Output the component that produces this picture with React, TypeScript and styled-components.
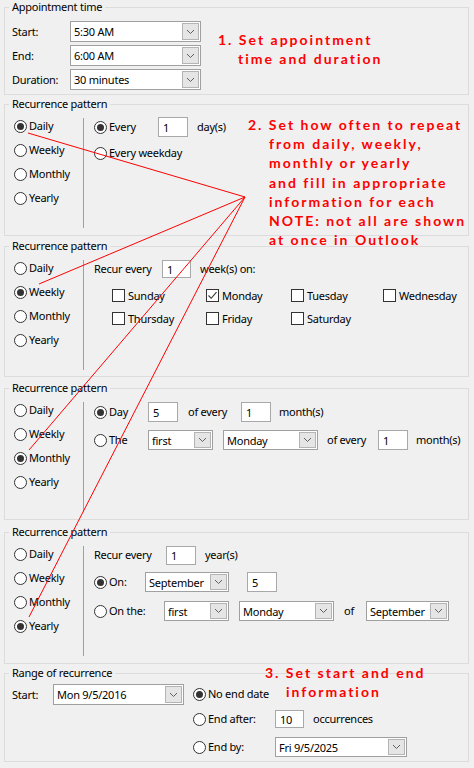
import React from "react";
import styled, { createGlobalStyle } from "styled-components";

const GlobalStyle = createGlobalStyle`
  html, body { margin: 0; padding: 0; background: #f0f0f0; }
  body {
    font-family: "Noto Sans", "Segoe UI", sans-serif;
    font-size: 11px;
    letter-spacing: -0.25px;
    color: #000;
  }
  * { box-sizing: border-box; }
`;

const Page = styled.div`
  position: relative;
  width: 474px;
  height: 768px;
  overflow: hidden;
  padding-left: 4px;
  display: flex;
  flex-direction: column;
`;

const Group = styled.fieldset<{ $mt: number; $h: number }>`
  margin: ${(p) => p.$mt}px 0 0 0;
  padding: 0;
  width: 465px;
  height: ${(p) => p.$h}px;
  min-width: 0;
  border: 1px solid #dcdcdc;
  flex-shrink: 0;
`;

const Legend = styled.legend`
  margin-left: 4px;
  padding: 0 3px;
  line-height: 14px;
  height: 14px;
`;

const Body = styled.div<{ $pt: number; $pl: number }>`
  display: flex;
  padding-top: ${(p) => p.$pt}px;
  padding-left: ${(p) => p.$pl}px;
`;

const Column = styled.div<{ $w?: number; $ml?: number; $gap?: number }>`
  display: flex;
  flex-direction: column;
  width: ${(p) => (p.$w ? `${p.$w}px` : "auto")};
  margin-left: ${(p) => p.$ml ?? 0}px;
  gap: ${(p) => p.$gap ?? 0}px;
  flex-shrink: 0;
`;

const Row = styled.div<{ $h: number }>`
  display: flex;
  align-items: center;
  height: ${(p) => p.$h}px;
  white-space: nowrap;
`;

const Text = styled.span<{ $w?: number; $ml?: number }>`
  display: inline-block;
  width: ${(p) => (p.$w ? `${p.$w}px` : "auto")};
  margin-left: ${(p) => p.$ml ?? 0}px;
  flex-shrink: 0;
  white-space: nowrap;
  line-height: 14px;
`;

const Separator = styled.div`
  width: 1px;
  height: 110px;
  margin-top: 4px;
  background: #a0a0a0;
  flex-shrink: 0;
`;

const RadioWrap = styled.span<{ $w?: number }>`
  display: inline-flex;
  align-items: center;
  gap: 2px;
  width: ${(p) => (p.$w ? `${p.$w}px` : "auto")};
  flex-shrink: 0;
  line-height: 14px;
`;

const RadioCircle = styled.span<{ $on?: boolean }>`
  width: 13px;
  height: 13px;
  border-radius: 50%;
  border: 1px solid #333;
  background: #fff;
  display: flex;
  align-items: center;
  justify-content: center;
  flex-shrink: 0;
  &::after {
    content: "";
    display: ${(p) => (p.$on ? "block" : "none")};
    width: 7px;
    height: 7px;
    border-radius: 50%;
    background: #333;
  }
`;

const CheckWrap = styled.span`
  display: inline-flex;
  align-items: center;
  gap: 3px;
  line-height: 14px;
`;

const CheckBoxSquare = styled.span`
  width: 13px;
  height: 13px;
  border: 1px solid #333;
  background: #fff;
  display: flex;
  align-items: center;
  justify-content: center;
  flex-shrink: 0;
`;

const TextBox = styled.span<{ $w: number; $h?: number; $ml?: number }>`
  display: inline-flex;
  align-items: center;
  width: ${(p) => p.$w}px;
  height: ${(p) => p.$h ?? 20}px;
  margin-left: ${(p) => p.$ml ?? 0}px;
  padding-left: 4px;
  background: #fff;
  border: 1px solid #a8a8a8;
  flex-shrink: 0;
`;

const ComboBox = styled.span<{ $w: number; $h?: number; $ml?: number }>`
  display: inline-flex;
  width: ${(p) => p.$w}px;
  height: ${(p) => p.$h ?? 20}px;
  margin-left: ${(p) => p.$ml ?? 0}px;
  background: #fff;
  border: 1px solid #a0a0a0;
  flex-shrink: 0;
`;

const ComboText = styled.span`
  flex: 1;
  display: flex;
  align-items: center;
  padding-left: 3px;
  overflow: hidden;
`;

const ComboButton = styled.span`
  width: 17px;
  margin: 1px;
  background: #e5e5e5;
  border: 1px solid #b4b4b4;
  display: flex;
  align-items: center;
  justify-content: center;
  flex-shrink: 0;
`;

const CheckGrid = styled.div`
  display: grid;
  grid-template-columns: 94px 85px 92px auto;
  grid-auto-rows: 23px;
  align-items: center;
  margin-top: 2px;
  margin-left: 18px;
`;

const Annotation = styled.div<{ $x: number; $y: number }>`
  position: absolute;
  left: ${(p) => p.$x}px;
  top: ${(p) => p.$y}px;
  color: #ff0000;
  font-family: Lato, "Open Sans", sans-serif;
  font-weight: 700;
  font-size: 14px;
  letter-spacing: 2px;
  line-height: 19.2px;
  white-space: nowrap;
`;

const AnnLine = styled.div<{ $indent?: number }>`
  padding-left: ${(p) => p.$indent ?? 0}px;
`;

const Overlay = styled.svg`
  position: absolute;
  left: 0;
  top: 0;
  pointer-events: none;
`;

const Chevron = () => (
  <svg width="9" height="6" viewBox="0 0 9 6">
    <polyline points="1,1 4.5,4.5 8,1" fill="none" stroke="#606060" strokeWidth="1" />
  </svg>
);

const Combo: React.FC<{ w: number; h?: number; ml?: number; value: string }> = ({ w, h, ml, value }) => (
  <ComboBox $w={w} $h={h} $ml={ml}>
    <ComboText>{value}</ComboText>
    <ComboButton>
      <Chevron />
    </ComboButton>
  </ComboBox>
);

const Radio: React.FC<{ on?: boolean; w?: number; label: string }> = ({ on, w, label }) => (
  <RadioWrap $w={w}>
    <RadioCircle $on={on} />
    <span>{label}</span>
  </RadioWrap>
);

const Check: React.FC<{ on?: boolean; label: string }> = ({ on, label }) => (
  <CheckWrap>
    <CheckBoxSquare>
      {on && (
        <svg width="11" height="11" viewBox="0 0 11 11">
          <polyline points="1.5,5.5 4.2,8.3 9.5,2.2" fill="none" stroke="#333" strokeWidth="1.1" />
        </svg>
      )}
    </CheckBoxSquare>
    <span>{label}</span>
  </CheckWrap>
);

const PATTERNS = ["Daily", "Weekly", "Monthly", "Yearly"];

const RecurrenceGroup: React.FC<{ mt: number; h: number; selected: number; children: React.ReactNode }> = ({
  mt,
  h,
  selected,
  children,
}) => (
  <Group $mt={mt} $h={h}>
    <Legend>Recurrence pattern</Legend>
    <Body $pt={3} $pl={9}>
      <Column $w={69}>
        {PATTERNS.map((p, i) => (
          <Row key={p} $h={24}>
            <Radio on={i === selected} label={p} />
          </Row>
        ))}
      </Column>
      <Separator />
      <Column $ml={10}>{children}</Column>
    </Body>
  </Group>
);

export default function App() {
  return (
    <>
      <GlobalStyle />
      <Page>
        <Group $mt={0} $h={95}>
          <Legend>Appointment time</Legend>
          <Body $pt={7} $pl={7}>
            <Column $gap={3}>
              <Row $h={21}>
                <Text $w={58}>Start:</Text>
                <Combo w={131} h={21} value="5:30 AM" />
              </Row>
              <Row $h={21}>
                <Text $w={58}>End:</Text>
                <Combo w={131} h={21} value="6:00 AM" />
              </Row>
              <Row $h={21}>
                <Text $w={58}>Duration:</Text>
                <Combo w={131} h={21} value="30 minutes" />
              </Row>
            </Column>
          </Body>
        </Group>

        <RecurrenceGroup mt={2} h={139} selected={0}>
          <Row $h={26}>
            <Radio on w={64} label="Every" />
            <TextBox $w={30}>1</TextBox>
            <Text $ml={9}>day(s)</Text>
          </Row>
          <Row $h={26}>
            <Radio label="Every weekday" />
          </Row>
        </RecurrenceGroup>

        <RecurrenceGroup mt={3} h={138} selected={1}>
          <Row $h={26}>
            <Text $w={68}>Recur every</Text>
            <TextBox $w={29} $h={18}>1</TextBox>
            <Text $ml={9}>week(s) on:</Text>
          </Row>
          <CheckGrid>
            <Check label="Sunday" />
            <Check on label="Monday" />
            <Check label="Tuesday" />
            <Check label="Wednesday" />
            <Check label="Thursday" />
            <Check label="Friday" />
            <Check label="Saturday" />
          </CheckGrid>
        </RecurrenceGroup>

        <RecurrenceGroup mt={4} h={139} selected={2}>
          <Row $h={28}>
            <Radio on w={54} label="Day" />
            <TextBox $w={30}>5</TextBox>
            <Text $ml={10} $w={53}>of every</Text>
            <TextBox $w={30}>1</TextBox>
            <Text $ml={8}>month(s)</Text>
          </Row>
          <Row $h={28}>
            <Radio w={54} label="The" />
            <Combo w={65} value="first" />
            <Combo w={95} ml={10} value="Monday" />
            <Text $ml={9} $w={51}>of every</Text>
            <TextBox $w={30}>1</TextBox>
            <Text $ml={8}>month(s)</Text>
          </Row>
        </RecurrenceGroup>

        <RecurrenceGroup mt={5} h={139} selected={3}>
          <Row $h={26}>
            <Text $w={72}>Recur every</Text>
            <TextBox $w={30} $h={19}>1</TextBox>
            <Text $ml={9}>year(s)</Text>
          </Row>
          <Row $h={28}>
            <Radio on w={51} label="On:" />
            <Combo w={84} value="September" />
            <TextBox $w={30} $ml={18}>5</TextBox>
          </Row>
          <Row $h={30}>
            <Radio w={70} label="On the:" />
            <Combo w={65} value="first" />
            <Combo w={95} ml={10} value="Monday" />
            <Text $ml={10} $w={22}>of</Text>
            <Combo w={83} value="September" />
          </Row>
        </RecurrenceGroup>

        <Group $mt={2} $h={96}>
          <Legend>Range of recurrence</Legend>
          <Body $pt={3} $pl={7}>
            <Row $h={23}>
              <Text $w={41}>Start:</Text>
              <Combo w={131} h={21} value="Mon 9/5/2016" />
            </Row>
            <Column $ml={9}>
              <Row $h={22}>
                <Radio on label="No end date" />
              </Row>
              <Row $h={28}>
                <Radio w={82} label="End after:" />
                <TextBox $w={29} $h={18}>10</TextBox>
                <Text $ml={9}>occurrences</Text>
              </Row>
              <Row $h={28}>
                <Radio w={82} label="End by:" />
                <Combo w={132} value="Fri 9/5/2025" />
              </Row>
            </Column>
          </Body>
        </Group>

        <Annotation $x={218} $y={30}>
          <AnnLine>1. Set appointment</AnnLine>
          <AnnLine $indent={20}>time and duration</AnnLine>
        </Annotation>

        <Annotation $x={248} $y={115}>
          <AnnLine>2. Set how often to repeat</AnnLine>
          <AnnLine $indent={21}>from daily, weekly,</AnnLine>
          <AnnLine $indent={21}>monthly or yearly</AnnLine>
          <AnnLine $indent={21}>and fill in appropriate</AnnLine>
          <AnnLine $indent={21}>information for each</AnnLine>
          <AnnLine $indent={21}>NOTE: not all are shown</AnnLine>
          <AnnLine $indent={21}>at once in Outlook</AnnLine>
        </Annotation>

        <Annotation $x={265} $y={663}>
          <AnnLine>3. Set start and end</AnnLine>
          <AnnLine $indent={21}>information</AnnLine>
        </Annotation>

        <Overlay width="474" height="768" viewBox="0 0 474 768">
          <g stroke="#ff0000" strokeWidth="1" fill="none">
            <line x1="245" y1="197" x2="28" y2="133" />
            <line x1="245" y1="197" x2="39" y2="284" />
            <line x1="245" y1="197" x2="29" y2="450" />
            <line x1="245" y1="197" x2="29" y2="617" />
          </g>
        </Overlay>
      </Page>
    </>
  );
}
